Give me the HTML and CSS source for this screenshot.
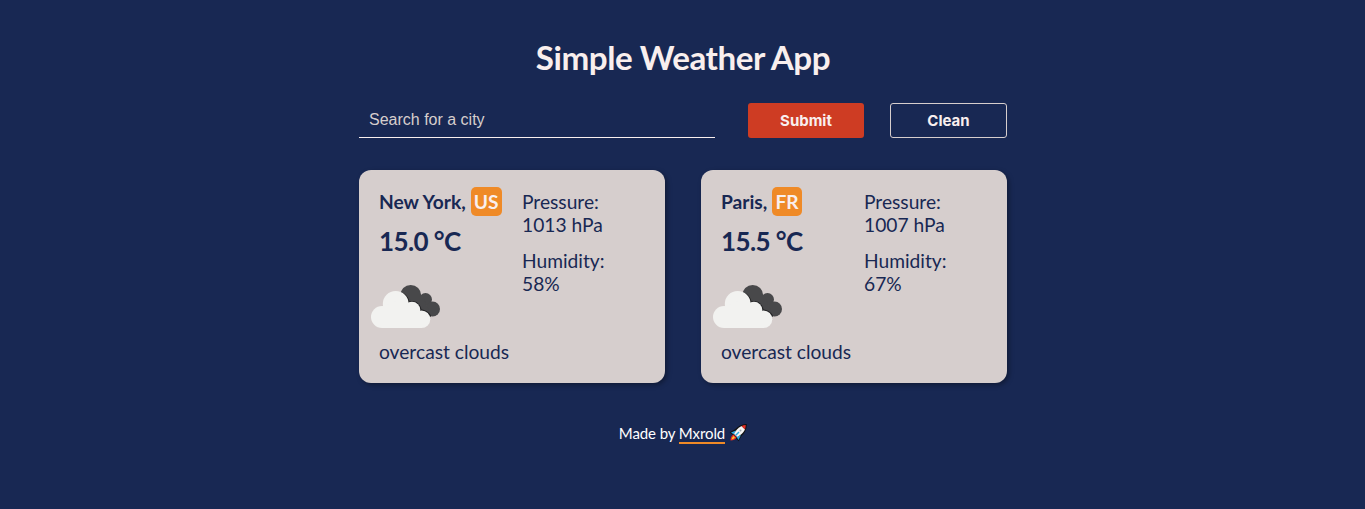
FILE: index.html
```html
<!DOCTYPE html>
<html lang="en">
<head>
<meta charset="utf-8">
<title>Simple Weather App</title>
<link rel="stylesheet" href="styles.css">
</head>
<body>
<svg width="0" height="0" class="defs" aria-hidden="true">
  <symbol id="clouds" viewBox="0 0 69 43">
    <g fill="#48484a">
      <circle cx="39.700" cy="10.500" r="10.500"/>
      <circle cx="54.500" cy="14.500" r="6.500"/>
      <circle cx="61.600" cy="24" r="7.400"/>
      <path d="M38 12L52 12L60 31L48 31Z"/>
    </g>
    <path fill="#222224" d="M31 7.500C35 9 38 13 38.500 16.500C43 14.500 49.500 18 50.500 24.500C55 25 59 27.500 60.200 31.500L48 34L30 22Z"/>
    <g fill="#f2f2f0">
      <circle cx="24.700" cy="18.900" r="12.900"/>
      <circle cx="11" cy="32" r="11"/>
      <circle cx="41" cy="25" r="8.300"/>
      <circle cx="50.500" cy="34.200" r="8.800"/>
      <path d="M11 43V22L25 16L42 24L51 34V43Z"/>
    </g>
  </symbol>
</svg>
<main class="app">
  <h1 class="title">Simple Weather App</h1>
  <form class="search">
    <input class="search-input" type="text" placeholder="Search for a city">
    <button class="btn btn-submit" type="button">Submit</button>
    <button class="btn btn-clean" type="button">Clean</button>
  </form>
  <section class="cards">
    <article class="card">
      <div class="col-main">
        <h2 class="city">New York, <span class="country">US</span></h2>
        <p class="temp">15.0 °C</p>
        <svg class="icon"><use href="#clouds"/></svg>
        <p class="desc">overcast clouds</p>
      </div>
      <div class="col-info">
        <p>Pressure:<br>1013 hPa</p>
        <p>Humidity:<br>58%</p>
      </div>
    </article>
    <article class="card">
      <div class="col-main">
        <h2 class="city">Paris, <span class="country">FR</span></h2>
        <p class="temp">15.5 °C</p>
        <svg class="icon"><use href="#clouds"/></svg>
        <p class="desc">overcast clouds</p>
      </div>
      <div class="col-info">
        <p>Pressure:<br>1007 hPa</p>
        <p>Humidity:<br>67%</p>
      </div>
    </article>
  </section>
  <footer class="footer">
    <span>Made by <a class="author" href="#">Mxrold</a></span>
    <svg class="rocket" viewBox="0 0 18 18">
      <path d="M2 8.500L6.500 6Q11 1 17 .8Q17 7 12 11.500L9.500 16L7 13L4.500 10.500Z" fill="#111" stroke="#111" stroke-width="1.500"/>
      <path d="M2 8.500L7 6.500L5 10.500ZM9.500 16L7.500 13L12 11Z" fill="#28a8e0"/>
      <path d="M5 10Q7.500 4.500 12.500 2L16 5.500Q13.500 10.500 8 13Z" fill="#f4f4f4"/>
      <path d="M12.500 2Q14.500 1.200 16.700 1.100Q16.700 3.500 16 5.500Z" fill="#e92f25"/>
      <path d="M6.500 11.500L10 8" stroke="#28a8e0" stroke-width="1.400"/>
      <path d="M4.500 10.500Q1.500 12 1.500 16.500Q6 16.500 7.500 13.500Z" fill="#e92f25"/>
      <path d="M4.500 12Q3 13 2.500 15.500Q5 15 6 13.500Z" fill="#ffc928"/>
      <circle cx="11.500" cy="6.500" r="1" fill="#98a4ac"/>
    </svg>
  </footer>
</main>
</body>
</html>
```
FILE: styles.css
```css
* { box-sizing: border-box; margin: 0; padding: 0; }
body {
  min-height: 100vh;
  background: #182853;
  color: #182853;
  font-family: Lato, sans-serif;
}
.defs { position: absolute; }
.app { width: 648px; margin-left: 359px; padding-top: 37px; }
.title {
  font-size: 33.2px;
  line-height: 40px;
  font-weight: 700;
  letter-spacing: -.45px;
  text-align: center;
  color: #f9efee;
}
.search { display: flex; height: 35px; margin-top: 26px; }
.search-input {
  width: 356px;
  margin-right: 33px;
  padding: 0 10px;
  border: 0;
  border-bottom: 1px solid #f9efee;
  background: transparent;
  color: #f9efee;
  font: 16px "Liberation Sans", sans-serif;
}
.search-input::placeholder { color: #d6cecd; opacity: 1; }
.btn {
  width: 116px;
  border: 0;
  border-radius: 3px;
  color: #f9efee;
  font: 700 15px Inter, sans-serif;
}
.btn-submit { background: #ce3c23; margin-right: 26px; }
.btn-clean { width: 117px; background: transparent; border: 1px solid #d6cecd; }
.cards { display: flex; gap: 36px; margin-top: 32px; }
.card {
  display: flex;
  width: 306px;
  height: 213px;
  padding: 17px 20px;
  border-radius: 12px;
  background: #d6cecd;
  box-shadow: 2px 2px 5px rgba(0, 0, 0, .35);
  font-size: 19.2px;
  line-height: 23px;
}
.col-main { width: 143px; }
.city { font-size: 19.2px; line-height: 29px; font-weight: 700; white-space: nowrap; }
.country {
  display: inline-block;
  padding: 0 3px;
  border-radius: 5px;
  background: #ef8a27;
  color: #f9efee;
  margin-left: .5px;
}
.temp { margin-top: 10px; font-size: 26px; line-height: 31px; font-weight: 700; letter-spacing: -.6px; }
.icon { display: block; width: 69px; height: 43px; margin: 28px 0 0 -8px; }
.desc { margin-top: 12px; }
.col-info { padding-top: 3px; }
.col-info p + p { margin-top: 13px; }
.footer {
  display: flex;
  justify-content: center;
  gap: 4px;
  margin-top: 41px;
  color: #fff;
  font-size: 15px;
  line-height: 18px;
  letter-spacing: -.1px;
}
.author { display: inline-block; color: inherit; text-decoration: none; border-bottom: 2px solid #ef8a27; }
.rocket { width: 18px; height: 18px; }
```
